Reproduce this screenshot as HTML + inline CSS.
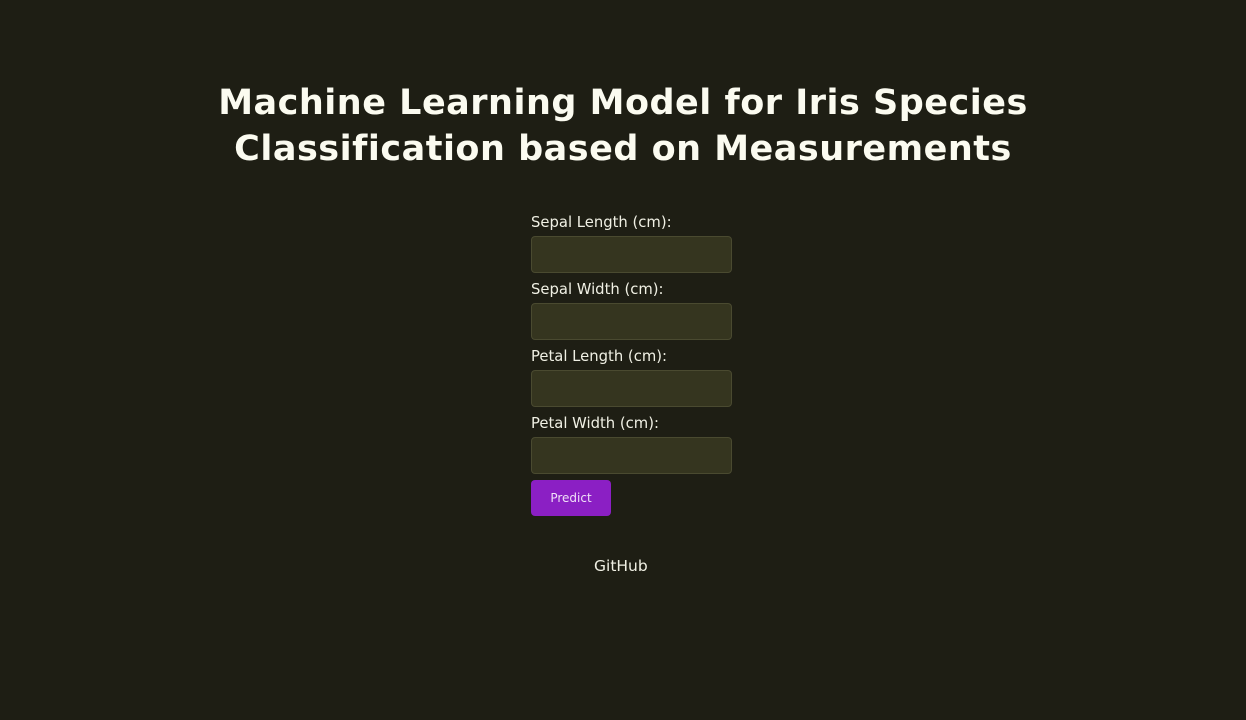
<!DOCTYPE html>
<html><head><style>
html,body{margin:0;padding:0;}
body{width:1246px;height:720px;background:#1e1e14;font-family:"DejaVu Sans","Liberation Sans",sans-serif;color:#f2f2e6;position:relative;overflow:hidden;}
h1{position:absolute;top:80px;left:0;width:1246px;text-align:center;margin:0;font-size:35px;line-height:46px;font-weight:bold;color:#fbfbf0;letter-spacing:0.5px;}
label{position:absolute;left:531px;font-size:14.8px;color:#f0f0e4;}
.in{position:absolute;left:531px;width:199px;height:35px;background:#35351f;border:1px solid #4a4a30;border-radius:4px;}
.btn{position:absolute;left:531px;top:480px;width:80px;height:36px;background:#8b1fc4;border-radius:4px;color:#f0e0f8;font-size:12px;text-align:center;line-height:36px;}
.gh{position:absolute;left:594px;top:557px;font-size:15.5px;color:#f0f0e4;}
</style></head><body>
<h1>Machine Learning Model for Iris Species<br>Classification based on Measurements</h1>
<label style="top:214px">Sepal Length (cm):</label>
<div class="in" style="top:236px"></div>
<label style="top:281px">Sepal Width (cm):</label>
<div class="in" style="top:303px"></div>
<label style="top:348px">Petal Length (cm):</label>
<div class="in" style="top:370px"></div>
<label style="top:415px">Petal Width (cm):</label>
<div class="in" style="top:437px"></div>
<div class="btn">Predict</div>
<div class="gh">GitHub</div>
</body></html>
